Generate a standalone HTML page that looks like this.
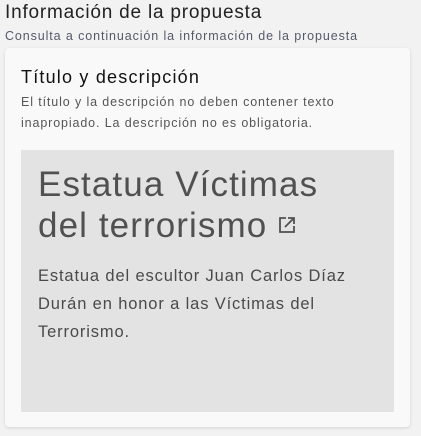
<!DOCTYPE html>
<html><head><meta charset="utf-8"><style>
html,body{margin:0;padding:0;width:421px;height:436px;overflow:hidden;background:#f2f2f2;font-family:"Liberation Sans",sans-serif;}
.h{position:absolute;left:5px;top:2px;font-size:19px;letter-spacing:.8px;color:#222;white-space:nowrap;}
.s{position:absolute;left:5px;top:29px;font-size:12.5px;letter-spacing:.9px;color:#555a6a;white-space:nowrap;}
.card{position:absolute;left:5px;top:48px;width:405px;height:379px;background:#f9f9f9;border-radius:4px;box-shadow:0 1px 3px rgba(0,0,0,.12);}
.ct{position:absolute;left:21px;top:67px;font-size:18px;letter-spacing:1.2px;color:#111;white-space:nowrap;}
.cd{position:absolute;left:21px;top:92px;font-size:12.5px;letter-spacing:.88px;line-height:21px;color:#555;white-space:nowrap;}
.box{position:absolute;left:21px;top:150px;width:373px;height:262px;background:#e3e3e3;}
.bt{position:absolute;left:38px;top:164px;font-size:35px;line-height:41px;color:#505050;white-space:nowrap;letter-spacing:1.1px;}
.bd{position:absolute;left:38px;top:262px;font-size:16.5px;letter-spacing:.86px;line-height:28px;color:#4a4a4a;white-space:nowrap;}
</style></head><body>
<div class="h">Información de la propuesta</div>
<div class="s">Consulta a continuación la información de la propuesta</div>
<div class="card"></div>
<div class="ct">Título y descripción</div>
<div class="cd">El título y la descripción no deben contener texto<br>inapropiado. La descripción no es obligatoria.</div>
<div class="box"></div>
<div class="bt">Estatua Víctimas<br>del terrorismo <svg width="18" height="18" viewBox="0 0 18 18" style="vertical-align:3px"><path d="M8 2H2v14h14v-6" fill="none" stroke="#505050" stroke-width="1.8"/><path d="M10 2h6v6M16 2L7 11" fill="none" stroke="#505050" stroke-width="1.8"/></svg></div>
<div class="bd">Estatua del escultor Juan Carlos Díaz<br>Durán en honor a las Víctimas del<br>Terrorismo.</div>
</body></html>
